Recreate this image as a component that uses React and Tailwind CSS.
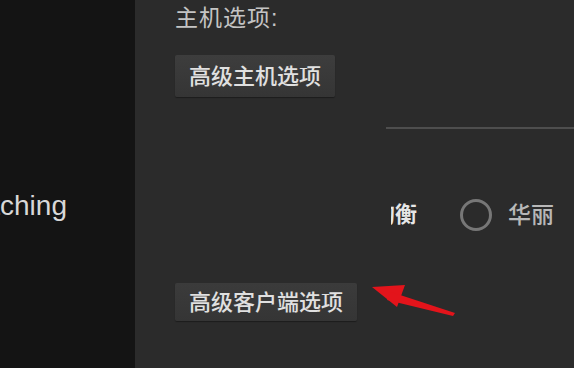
export default function App() {
  const cjk = { fontFamily: '"Liberation Sans", "Noto Sans CJK SC", sans-serif' };
  return (
    <div className="flex w-[574px] h-[368px] overflow-hidden" style={cjk}>
      {/* sidebar */}
      <div className="w-[135px] shrink-0 bg-[#141414] flex flex-col">
        <div className="h-[188px]" />
        <div className="w-[67px] overflow-hidden flex justify-end">
          <span className="text-[28px] leading-[36px] text-[#d8d8d8] whitespace-nowrap">Matching</span>
        </div>
      </div>

      {/* main panel */}
      <div className="flex-1 bg-[#2b2b2b] relative flex flex-col pl-[40px]">
        <div className="pt-[4px] text-[23px] leading-[29px] tracking-[1px] text-[#c4c4c4]">主机选项:</div>
        <div className="mt-[22px] flex">
          <button className="h-[42px] px-[14px] bg-gradient-to-b from-[#3d3d3d] to-[#353535] rounded-[2px] text-[22px] font-medium text-[#e0e0e0] shadow-[0_1px_1px_rgba(0,0,0,0.35)]">
            高级主机选项
          </button>
        </div>
        <div className="mt-[30px] ml-[211px] h-[2px] bg-[#4e4e4e]" />

        <div className="mt-[71px] ml-[216px] flex items-center h-[30px]">
          <div className="w-[26px] overflow-hidden flex justify-end">
            <span className="text-[22px] leading-[28px] text-[#e6e6e6] whitespace-nowrap font-bold">均衡</span>
          </div>
          <div className="ml-[43px] w-[32px] h-[32px] rounded-full border-[3px] border-[#777777]" />
          <span className="ml-[16px] text-[23px] leading-[28px] text-[#b8b8b8] font-medium">华丽</span>
        </div>

        <div className="mt-[53px] flex">
          <button className="h-[38px] px-[14px] bg-gradient-to-b from-[#3b3b3b] to-[#353535] rounded-[2px] text-[22px] font-medium text-[#e0e0e0] shadow-[0_1px_1px_rgba(0,0,0,0.35)]">
            高级客户端选项
          </button>
        </div>

        {/* red annotation arrow */}
        <svg className="absolute left-[230px] top-[278px]" width="100" height="45" viewBox="0 0 100 45">
          <polygon points="7,9 40,7 32,29" fill="#e3141b" />
          <polygon points="26,14 90,35 88,38 22,22" fill="#e3141b" />
        </svg>
      </div>
    </div>
  );
}
